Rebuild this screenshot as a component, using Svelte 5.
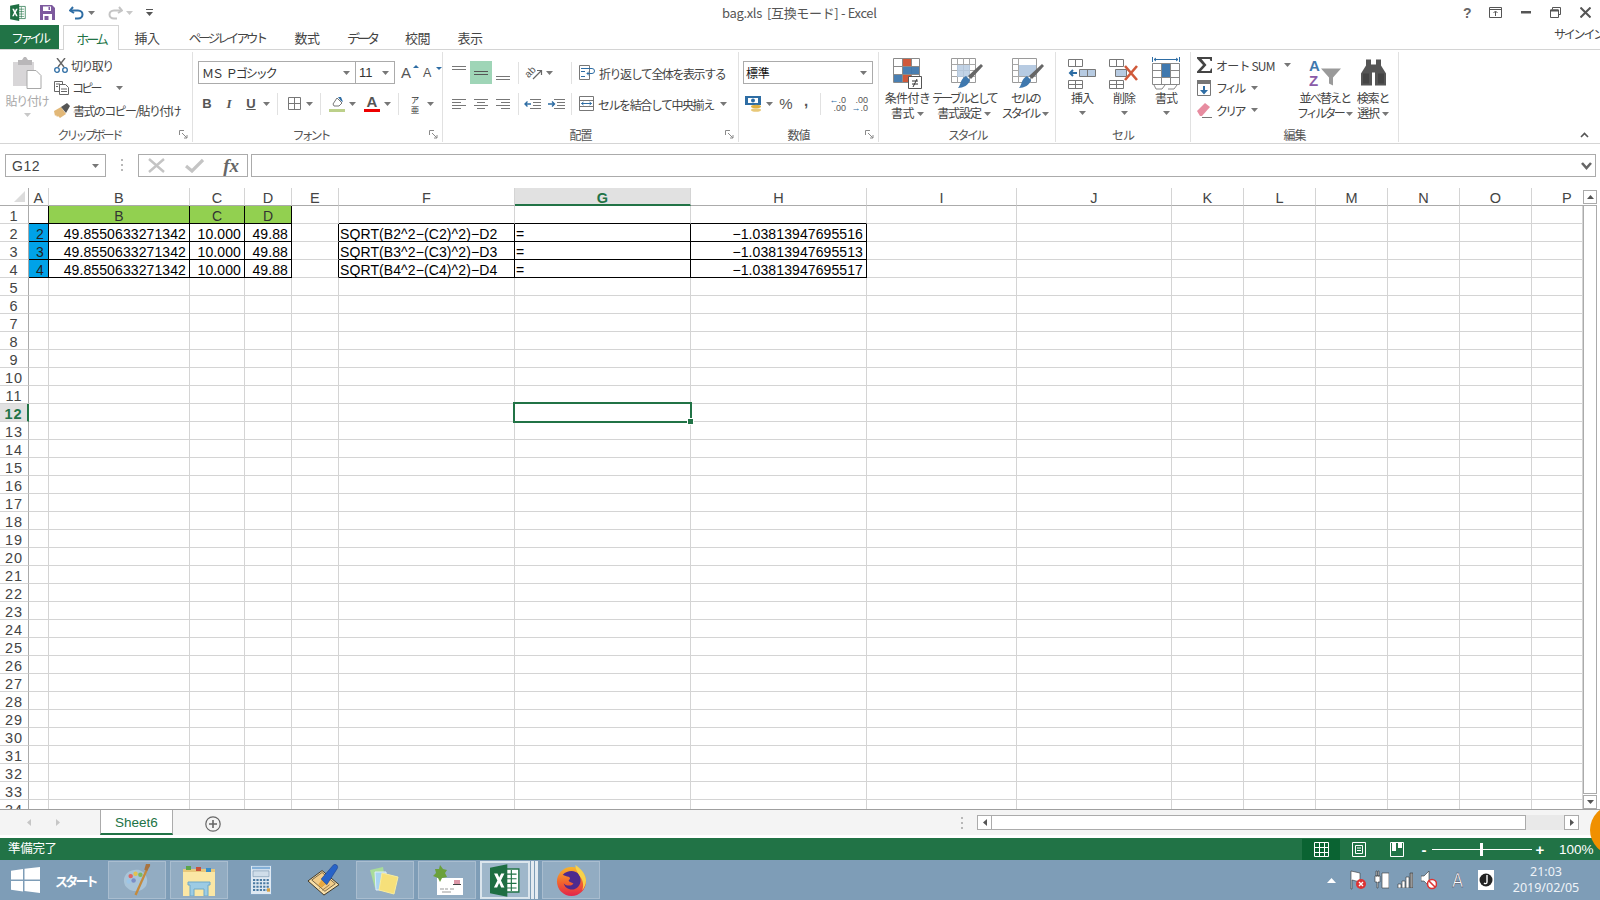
<script>
	const cols = [
		['A', 20], ['B', 141], ['C', 55], ['D', 47], ['E', 47], ['F', 176], ['G', 176], ['H', 176],
		['I', 150], ['J', 155], ['K', 72], ['L', 72], ['M', 72], ['N', 72], ['O', 72], ['P', 51]
	]
	const rows = Array.from({ length: 34 }, (_, i) => i + 1)
	const template = '29px ' + cols.map((c) => c[1] + 'px').join(' ')

	const data = {
		A2: '2', A3: '3', A4: '4',
		B1: 'B', C1: 'C', D1: 'D',
		B2: '49.8550633271342', B3: '49.8550633271342', B4: '49.8550633271342',
		C2: '10.000', C3: '10.000', C4: '10.000',
		D2: '49.88', D3: '49.88', D4: '49.88',
		F2: 'SQRT(B2^2−(C2)^2)−D2', F3: 'SQRT(B3^2−(C3)^2)−D3', F4: 'SQRT(B4^2−(C4)^2)−D4',
		G2: '=', G3: '=', G4: '=',
		H2: '−1.03813947695516', H3: '−1.03813947695513', H4: '−1.03813947695517'
	}

	function boxed(r, c) {
		if (c === undefined) return false
		if ('BCD'.includes(c)) return r >= 1 && r <= 4
		if ('AFGH'.includes(c)) return r >= 2 && r <= 4
		return false
	}

	function cellClass(r, i) {
		const c = cols[i][0]
		const next = cols[i + 1]?.[0]
		let cls = 'cell'
		if (boxed(r, c) || boxed(r, next)) cls += ' br'
		if (boxed(r, c) || boxed(r + 1, c)) cls += ' bb'
		if (r === 1 && 'BCD'.includes(c)) cls += ' green mid'
		if (c === 'A' && r >= 2 && r <= 4) cls += ' blue'
		if (r > 1 && 'BCDH'.includes(c)) cls += ' num'
		return cls
	}
</script>

{#snippet caret(cls = '')}
	<svg class="caret {cls}" width="7" height="4" viewBox="0 0 7 4"><path d="M0 0h7L3.500 4z" /></svg>
{/snippet}

{#snippet launcher()}
	<svg class="launcher" width="9" height="9" viewBox="0 0 9 9" fill="none" stroke="#8a8a8a"><path d="M.5 5V.5H5M3 3l5 5M8 5v3H5" /></svg>
{/snippet}

{#snippet excel(w, h)}
	<svg width={w} height={h} viewBox="0 0 26 28">
		<path fill="#fff" stroke="#217346" stroke-width="1.2" d="M12 4h13v20H12z" />
		<path stroke="#217346" stroke-width="1" d="M14 8.500h9M14 12.500h9M14 16.500h9M14 20.500h9M18.500 5v18" />
		<path fill="#1e6e42" d="M0 3l15-3v28L0 25z" />
		<path fill="#fff" d="M3.500 8h3l1.500 3.500L9.700 8h2.800L9.500 14l3 6H9.700l-1.800-3.800L6.200 20H3.400l3-6z" />
	</svg>
{/snippet}

<div class="app">
	<header class="title">
		<div class="qat">
			{@render excel(16, 17)}
			<svg class="q-save" width="15" height="15" viewBox="0 0 15 15"><path fill="#7d5a9e" d="M0 0h12l3 3v12H0z" /><path fill="#fff" d="M3 1.500h8V6H3zM3 9h9v6H3z" /><path fill="#7d5a9e" d="M8.500 2h1.500v3H8.500zM4.500 11h4v4h-4z" /></svg>
			<svg class="q-undo" width="16" height="14" viewBox="0 0 16 14" fill="none"><path d="M4 1L1 4.500 5 7" stroke="#2e6da4" stroke-width="2" /><path d="M2 4.500h7c6 0 6 8 0 8H6" stroke="#2e6da4" stroke-width="2" /></svg>
			{@render caret('q-c1')}
			<svg class="q-redo" width="16" height="14" viewBox="0 0 16 14" fill="none"><path d="M12 1l3 3.500L11 7" stroke="#c4c4c4" stroke-width="2" /><path d="M14 4.500H7c-6 0-6 8 0 8h3" stroke="#c4c4c4" stroke-width="2" /></svg>
			{@render caret('q-c2 pale')}
			<svg class="q-more" width="7" height="7" viewBox="0 0 7 7"><path fill="#555" d="M0 0h7v1H0zM0 3h7L3.500 7z" /></svg>
		</div>
		<div class="doc">bag.xls&nbsp; [互換モード] - Excel</div>
		<div class="win">
			<span class="help">?</span>
			<svg width="13" height="11" viewBox="0 0 13 11" fill="none" stroke="#555"><path d="M.5.500h12v10H.5zM.5 2.500h12" /><path d="M6.500 9V4.500M4.500 6l2-2 2 2" /></svg>
			<svg width="10" height="3" viewBox="0 0 10 3"><path fill="#555" d="M0 0h10v2.500H0z" /></svg>
			<svg width="11" height="11" viewBox="0 0 11 11" fill="none" stroke="#555"><path d="M2.500 2.500V.5h8v7h-2" /><path d="M.5 3h8v7.500h-8z" /><path d="M.5 3.500h8" stroke-width="2" /></svg>
			<svg width="11" height="11" viewBox="0 0 11 11" stroke="#555" stroke-width="2"><path d="M.5.500l10 10M10.500.500l-10 10" /></svg>
		</div>
	</header>

	<nav class="tabs">
		<span class="tab file">ファイル</span>
		<span class="tab home">ホーム</span>
		<span class="tab t1">挿入</span>
		<span class="tab t2">ページ レイアウト</span>
		<span class="tab t3">数式</span>
		<span class="tab t4">データ</span>
		<span class="tab t5">校閲</span>
		<span class="tab t6">表示</span>
		<span class="signin">サインイン</span>
	</nav>

	<section class="ribbon">
		<div class="group clip">
			<div class="body">
				<div class="paste">
					<svg width="29" height="32" viewBox="0 0 29 32">
						<path fill="#d8d6d8" d="M0 5h21v24H0z" />
						<path fill="#b9b7b9" d="M5 3h4l2-3h2l2 3h4v5H5z" />
						<path fill="#fff" stroke="#a8a8a8" d="M14 13.500h9l5 5v13H14z" />
					</svg>
					<span class="paste-l">貼り付け</span>
					{@render caret('pale')}
				</div>
				<div class="clip-rows">
					<div class="row-i">
						<svg width="14" height="15" viewBox="0 0 14 15" fill="none"><path d="M3 0l7 9M11 0L4 9" stroke="#666" stroke-width="1.400" /><circle cx="3" cy="12" r="2.300" stroke="#2e6da4" stroke-width="1.300" /><circle cx="11" cy="12" r="2.300" stroke="#2e6da4" stroke-width="1.300" /></svg>
						<span>切り取り</span>
					</div>
					<div class="row-i">
						<svg width="15" height="14" viewBox="0 0 15 14" fill="#fff" stroke="#666"><path d="M.5.500h8v10h-8z" /><path d="M5.500 3.500h6l3 3v7h-9z" /><path d="M2 3h4M2 5.500h2M7 8h6M7 10.500h6" /></svg>
						<span class="k">コピー</span>
						{@render caret('copy-c')}
					</div>
					<div class="row-i">
						<svg width="16" height="15" viewBox="0 0 16 15"><path fill="#e2b878" d="M0 8l7-4 5 7-6 4-2-2-1 1-1-2-1 1z" /><path fill="#555" d="M7 4l6-4 3 3-4 7z" /></svg>
						<span>書式のコピー/貼り付け</span>
					</div>
				</div>
			</div>
			<div class="glabel kl">クリップボード{@render launcher()}</div>
		</div>

		<div class="group font">
			<div class="body col">
				<div class="line">
					<div class="combo c-font"><span>ＭＳ Ｐゴシック</span>{@render caret()}</div>
					<div class="combo c-size"><span>11</span>{@render caret()}</div>
					<span class="grow">A<i class="up"></i></span>
					<span class="shrink">A<i class="dn"></i></span>
				</div>
				<div class="line l2 shift">
					<span class="tb b">B</span>
					<span class="tb it">I</span>
					<span class="tb u">U</span>{@render caret('tc')}
					<i class="sep"></i>
					<span class="tb"><svg width="13" height="13" viewBox="0 0 13 13" fill="none" stroke="#777"><path d="M.5.500h12v12H.5zM.5 6.500h12M6.500.500v12" /></svg></span>{@render caret('tc')}
					<i class="sep"></i>
					<span class="tb"><svg width="16" height="16" viewBox="0 0 16 16"><path fill="#fff" stroke="#777" d="M4 8l4-6 5 5-3 3H5z" /><path fill="#2e6da4" d="M9 1l3 0 2 5-2-1z" /><path fill="#bcd08a" d="M0 13h16v3H0z" /></svg></span>{@render caret('tc')}
					<span class="tb color">A<i></i></span>{@render caret('tc')}
					<i class="sep"></i>
					<span class="tb furi"><span>ア</span><span>亜</span></span>{@render caret('tc')}
				</div>
			</div>
			<div class="glabel kl">フォント{@render launcher()}</div>
		</div>

		<div class="group align">
			<div class="body col">
				<div class="line">
					<span class="tb"><svg width="14" height="16" viewBox="0 0 14 16" stroke="#777"><path d="M0 1.500h14M0 4.500h14" /></svg></span>
					<span class="tb on"><svg width="14" height="16" viewBox="0 0 14 16" stroke="#555"><path d="M0 6.500h14M0 9.500h14" /></svg></span>
					<span class="tb"><svg width="14" height="16" viewBox="0 0 14 16" stroke="#777"><path d="M0 11.500h14M0 14.500h14" /></svg></span>
					<i class="sep s5"></i>
					<span class="tb"><svg class="orient" width="18" height="16" viewBox="0 0 18 16" fill="none"><text class="ab" x="1" y="11" transform="rotate(-45 5 9)">ab</text><path d="M8 14l8-8M12 5.500h4.500V10" stroke="#666" stroke-width="1.200" /></svg></span>{@render caret('tc')}
					<i class="sep s6"></i>
					<svg class="wrapic" width="16" height="15" viewBox="0 0 16 15" fill="none"><path d="M.5.500h10v14H.5z" stroke="#777" /><path d="M2 3.500h11a2 2 0 010 5H8M10 6.500l-2 2 2 2M2 6.500h4M2 11.500h4" stroke="#2e6da4" /></svg>
					<span class="wtext">折り返して全体を表示する</span>
				</div>
				<div class="line l2">
					<span class="tb"><svg width="14" height="10" viewBox="0 0 14 10" stroke="#777"><path d="M0 .5h14M0 3.500h9M0 6.500h14M0 9.500h9" /></svg></span>
					<span class="tb"><svg width="14" height="10" viewBox="0 0 14 10" stroke="#777"><path d="M0 .5h14M3 3.500h8M0 6.500h14M3 9.500h8" /></svg></span>
					<span class="tb"><svg width="14" height="10" viewBox="0 0 14 10" stroke="#777"><path d="M0 .5h14M5 3.500h9M0 6.500h14M5 9.500h9" /></svg></span>
					<i class="sep s9"></i>
					<span class="tb w24"><svg width="17" height="10" viewBox="0 0 17 10" fill="none"><path d="M6 .5h11M9 3.500h8M9 6.500h8M6 9.500h11" stroke="#777" /><path d="M7 5H1M3.500 2.500L1 5l2.500 2.500" stroke="#2e6da4" stroke-width="1.400" /></svg></span>
					<span class="tb w24"><svg width="17" height="10" viewBox="0 0 17 10" fill="none"><path d="M6 .5h11M9 3.500h8M9 6.500h8M6 9.500h11" stroke="#777" /><path d="M0 5h6M4 2.500L6.500 5 4 7.500" stroke="#2e6da4" stroke-width="1.400" /></svg></span>
					<i class="sep s7"></i>
					<svg class="wrapic" width="15" height="15" viewBox="0 0 15 15" fill="none"><path d="M.5.500h14v14H.5zM.5 4.500h14M.5 10.500h14" stroke="#777" /><path d="M2.500 7.500h10M4.500 6l-2 1.500 2 1.500M10.500 6l2 1.500-2 1.500" stroke="#2e6da4" /></svg>
					<span class="wtext merge">セルを結合して中央揃え</span>{@render caret('mc')}
				</div>
			</div>
			<div class="glabel">配置{@render launcher()}</div>
		</div>

		<div class="group number">
			<div class="body col">
				<div class="line"><div class="combo c-num"><span>標準</span>{@render caret()}</div></div>
				<div class="line l2">
					<span class="tb w18"><svg width="17" height="18" viewBox="0 0 17 18"><path fill="#2e6da4" d="M0 1h16v9H0z" /><path fill="#fff" d="M3 3h10v5H3z" /><circle cx="8" cy="5.500" r="2" fill="#2e6da4" /><ellipse cx="11" cy="11.500" rx="5" ry="1.800" fill="#e0b040" /><ellipse cx="11" cy="15" rx="5" ry="1.800" fill="#e8c878" /></svg></span>{@render caret('tc')}
					<span class="tb pct">%</span>
					<span class="tb comma">,</span>
					<i class="sep s8"></i>
					<span class="dec"><span><b>←</b>.0</span><span>.00</span></span>
					<span class="dec"><span>.00</span><span><b>→</b>.0</span></span>
				</div>
			</div>
			<div class="glabel">数値{@render launcher()}</div>
		</div>

		<div class="group styles">
			<div class="body big-row">
				<div class="big w46">
					<svg width="29" height="31" viewBox="0 0 29 31">
						<path fill="#fff" stroke="#8a8a8a" d="M.5.500h26v24H.5z" />
						<path stroke="#8a8a8a" d="M.5 8.500h26M.5 16.500h26M9.500.500v24M18.500.500v24" />
						<path fill="#d0593a" d="M10 1h8v7h-8zM10 17h8v7h-8z" />
						<path fill="#3f78ae" d="M10 9h16v7H10zM1 17h8v7H1z" opacity=".95" />
						<path fill="#fff" stroke="#555" d="M15.500 18.500h13v12h-13z" />
						<path stroke="#333" d="M19 23h6M19 26h6M24 21l-4 8" />
					</svg>
					<span>条件付き<br />書式{@render caret('lc')}</span>
				</div>
				<div class="big w64">
					<svg class="nudge" width="32" height="31" viewBox="0 0 32 31">
						<path fill="#fff" stroke="#9a9a9a" d="M.5.500h24v24H.5z" />
						<path stroke="#a8a8a8" d="M.5 6.500h24M.5 12.500h24M.5 18.500h24M6.500.500v24M12.500.500v24M18.500.500v24" />
						<path fill="#b7cbe2" opacity=".85" d="M6 7h13v12H6z" />
						<path fill="#666" d="M30 6l2 2-12 13-3-3z" />
						<path fill="#3f78ae" d="M15 18l4 4c-1 5-7 8-12 8 3-3 2-9 8-12z" />
					</svg>
					<span><span class="k">テーブルとして</span><br />書式設定{@render caret('lc')}</span>
				</div>
				<div class="big w50">
					<svg class="nudge" width="32" height="31" viewBox="0 0 32 31">
						<path fill="#fff" stroke="#9a9a9a" d="M.5.500h24v24H.5z" />
						<path stroke="#a8a8a8" d="M.5 6.500h6M.5 12.500h6M.5 18.500h24M6.500.500v24M18.500 19v6" />
						<path fill="#b7cbe2" d="M7 7h17v11H7z" />
						<path fill="#666" d="M30 6l2 2-12 13-3-3z" />
						<path fill="#3f78ae" d="M15 18l4 4c-1 5-7 8-12 8 3-3 2-9 8-12z" />
					</svg>
					<span><span class="k">セルの</span><br /><span class="k">スタイル</span>{@render caret('lc')}</span>
				</div>
			</div>
			<div class="glabel kl2">スタイル</div>
		</div>

		<div class="group cells">
			<div class="body big-row">
				<div class="big w42">
					<svg width="29" height="31" viewBox="0 0 29 31" fill="none">
						<path stroke="#777" d="M.5 1.500h14v7H.5zM7.500 1.500v7M.5 22.500h14v8H.5zM.5 26.500h14M7.500 22.500v8" />
						<path fill="#b7cbe2" stroke="#777" d="M11.500 11.500h16v7h-16zM19.500 11.500v7" />
						<path stroke="#2e6da4" stroke-width="2" d="M9 15H2M5 12l-3 3 3 3" />
					</svg>
					<span>挿入</span>{@render caret('bc')}
				</div>
				<div class="big w42">
					<svg width="30" height="31" viewBox="0 0 30 31" fill="none">
						<path stroke="#777" d="M.5 1.500h14v7H.5zM7.500 1.500v7M.5 22.500h14v8H.5zM.5 26.500h14M7.500 22.500v8" />
						<path fill="#b7cbe2" stroke="#777" d="M6.500 11.500h11v7h-11z" />
						<path stroke="#d0593a" stroke-width="2.600" d="M16 8l12 14M28 8L16 22" />
					</svg>
					<span>削除</span>{@render caret('bc')}
				</div>
				<div class="big w42">
					<svg width="29" height="33" viewBox="0 0 29 33" fill="none">
						<path stroke="#2e6da4" d="M.5 0v5M27.500 0v5M2 2.500h24M4 1L2 2.500 4 4M24 1l2 1.500L24 4" />
						<path stroke="#888" fill="#fff" d="M.5 6.500h27v21H.5z" />
						<path stroke="#888" d="M.5 13.500h27M.5 20.500h27M9.500 6.500v21M18.500 6.500v21" />
						<path fill="#3f78ae" d="M10 7h8v13h-8z" />
						<path stroke="#888" d="M2 28l2 4h6l3-4M16 32h6l3-4" />
					</svg>
					<span>書式</span>{@render caret('bc')}
				</div>
			</div>
			<div class="glabel">セル</div>
		</div>

		<div class="group edit">
			<div class="body">
				<div class="clip-rows e-rows">
					<div class="row-i">
						<svg width="15" height="16" viewBox="0 0 15 16"><path fill="#444" d="M0 0h15v4h-1.500l-.8-2H4.500l5 6-5.500 6h9l1-2.500h1.500V16H0v-1.500L6 8 0 1.500z" /></svg>
						<span>オート SUM</span>{@render caret('sum-c')}
					</div>
					<div class="row-i">
						<svg width="15" height="16" viewBox="0 0 15 16"><path fill="#fff" stroke="#777" d="M.5.500h13v15H.5z" /><path fill="#777" d="M0 0h14v4H0z" /><path fill="#2e6da4" d="M6 6h2v4h3l-4 4.500L3 10h3z" /></svg>
						<span class="k">フィル</span>{@render caret('fil-c')}
					</div>
					<div class="row-i">
						<svg width="15" height="15" viewBox="0 0 15 15"><path fill="#e78ca0" d="M0 8l8-8 5 4-8 9H3z" /><path fill="#777" d="M5 14h10v1H5z" /></svg>
						<span class="k">クリア</span>{@render caret('fil-c')}
					</div>
				</div>
				<div class="big w56 sort">
					<svg width="32" height="30" viewBox="0 0 32 30">
						<text x="0" y="12" class="az a">A</text>
						<text x="0" y="27" class="az z">Z</text>
						<path fill="#9a9a9a" d="M12 10h20l-8 9v8l-4-2v-6z" />
					</svg>
					<span>並べ替えと<br /><span class="k">フィルター</span>{@render caret('lc')}</span>
				</div>
				<div class="big w42 find">
					<svg width="27" height="28" viewBox="0 0 27 28"><path fill="#555" d="M6 0h5v5h5V0h5v6l5 8v12H15V13h-3v13H1V14l5-8z" /><path fill="#333" d="M3 14h6v10H3zM18 14h6v10h-6z" opacity=".5" /></svg>
					<span>検索と<br />選択{@render caret('lc')}</span>
				</div>
			</div>
			<div class="glabel">編集</div>
		</div>

		<svg class="collapse" width="9" height="6" viewBox="0 0 9 6" fill="none" stroke="#555" stroke-width="1.600"><path d="M1 5l3.500-3.500L8 5" /></svg>
	</section>

	<section class="formula">
		<div class="namebox"><span>G12</span>{@render caret()}</div>
		<span class="dots"><i></i><i></i><i></i></span>
		<div class="fbtns">
			<svg width="17" height="15" viewBox="0 0 17 15" stroke="#c4c4c4" stroke-width="2.400"><path d="M1 1l15 13M16 1L1 14" /></svg>
			<svg width="19" height="15" viewBox="0 0 19 15" fill="none" stroke="#c4c4c4" stroke-width="3.200"><path d="M1 8l6 5L18 2" /></svg>
			<span class="fx">fx</span>
		</div>
		<div class="finput">
			<svg width="11" height="8" viewBox="0 0 11 8" fill="none" stroke="#666" stroke-width="2.600"><path d="M1 1l4.500 5L10 1" /></svg>
		</div>
	</section>

	<section class="sheet">
		<div class="grid-wrap">
			<div class="grid" style="grid-template-columns: {template}">
				<div class="corner"><svg width="11" height="11" viewBox="0 0 11 11"><path fill="#dcdcdc" d="M11 0v11H0z" /></svg></div>
				{#each cols as c}
					<div class="colh" class:active={c[0] === 'G'} class:cut={c[0] === 'P'}>{c[0]}</div>
				{/each}
				{#each rows as r}
					<div class="rowh" class:active={r === 12}>{r}</div>
					{#each cols as c, i}
						<div class={cellClass(r, i)}>{data[c[0] + r] ?? ''}</div>
					{/each}
				{/each}
			</div>
			<div class="selection"><i></i></div>
		</div>
		<div class="vscroll">
			<span class="sbtn"><svg width="7" height="4" viewBox="0 0 7 4"><path fill="#555" d="M3.500 0L7 4H0z" /></svg></span>
			<span class="vthumb"></span>
			<span class="sbtn"><svg width="7" height="4" viewBox="0 0 7 4"><path fill="#555" d="M0 0h7L3.500 4z" /></svg></span>
		</div>
	</section>

	<section class="sheetbar">
		<svg class="arr a1" width="4" height="7" viewBox="0 0 4 7"><path fill="#c6c6c6" d="M4 0v7L0 3.500z" /></svg>
		<svg class="arr a2" width="4" height="7" viewBox="0 0 4 7"><path fill="#c6c6c6" d="M0 0v7l4-3.500z" /></svg>
		<div class="sheettab">Sheet6</div>
		<svg class="plus" width="16" height="16" viewBox="0 0 16 16" fill="none" stroke="#666"><circle cx="8" cy="8" r="7.200" stroke-width="1.200" /><path d="M8 4v8M4 8h8" stroke-width="1.600" /></svg>
		<span class="dots d2"><i></i><i></i><i></i></span>
		<div class="hscroll">
			<span class="sbtn"><svg width="4" height="7" viewBox="0 0 4 7"><path fill="#555" d="M4 0v7L0 3.500z" /></svg></span>
			<span class="hthumb"></span>
			<span class="htrack"></span>
			<span class="sbtn"><svg width="4" height="7" viewBox="0 0 4 7"><path fill="#555" d="M0 0v7l4-3.500z" /></svg></span>
		</div>
	</section>

	<footer class="status">
		<span class="ready">準備完了</span>
		<div class="views">
			<span class="view on"><svg width="15" height="15" viewBox="0 0 15 15" fill="none" stroke="#fff"><path d="M.5.500h14v14H.5zM.5 5.500h14M.5 10.500h14M5.500.500v14M10.500.500v14" /></svg></span>
			<span class="view"><svg width="14" height="15" viewBox="0 0 14 15" fill="none" stroke="#fff"><path d="M.5.500h13v14H.5zM3.500 3.500h7v8h-7zM5 6h4M5 8.500h4" /></svg></span>
			<span class="view"><svg width="14" height="15" viewBox="0 0 14 15"><path fill="none" stroke="#fff" d="M.5.500h13v14H.5z" /><path fill="#fff" d="M2 1h4v8H2zM8 1h4v5H8z" /></svg></span>
		</div>
		<div class="zoom">
			<span class="zb">-</span>
			<span class="slider"><i></i></span>
			<span class="zb plusb">+</span>
		</div>
		<span class="pct100">100%</span>
	</footer>

	<footer class="taskbar">
		<div class="start">
			<svg width="29" height="26" viewBox="0 0 29 26"><path fill="#fff" d="M0 3.700l12-1.700v10.500H0zM13.500 1.800L29 0v12.500H13.500zM0 14h12v10.500L0 22.800zM13.500 14H29v12l-15.500-2z" /></svg>
			<span>スタート</span>
		</div>
		<div class="tasks">
			<span class="task box">
				<svg width="30" height="32" viewBox="1 3 29 33">
					<path fill="#a9c4d8" d="M2 20c0-8 8-12 15-11 7 2 11 9 8 16-3 6-10 7-16 5-4-2-7-5-7-10z" />
					<circle cx="7" cy="21" r="2.300" fill="#9cc6e8" /><circle cx="9" cy="15.500" r="2.300" fill="#d66" /><circle cx="14" cy="13" r="2.300" fill="#e2c250" /><circle cx="12" cy="20" r="2.300" fill="#7b8ec8" /><circle cx="19" cy="14" r="2.300" fill="#7cb860" />
					<path stroke="#c48a3c" stroke-width="2.400" d="M14 35l12-27" /><path fill="#a87440" d="M23 9l2-7 4-2v5l-3 5z" />
				</svg>
			</span>
			<span class="task box">
				<svg width="32" height="31" viewBox="0 0 32 31">
					<path fill="#e9c87a" d="M0 4h32v6H0z" />
					<path fill="#5ca64a" d="M3 1h5v4H3z" /><path fill="#c9503a" d="M13 2h5v4h-5z" /><path fill="#3a8fc9" d="M23 3h5v4h-5z" />
					<path fill="#fbe7a5" d="M0 7h32v24H0z" />
					<path fill="#9ccbe4" stroke="#6fa8c8" d="M5 17h22v3h-2v11h-4v-7H11v7H7V20H5z" />
				</svg>
			</span>
			<span class="task">
				<svg width="22" height="30" viewBox="0 0 22 36" preserveAspectRatio="none">
					<path fill="#dfe9f2" stroke="#7a9cbc" d="M.5.500h21v35H.5z" />
					<path fill="#84b0d8" d="M2 2h18v3H2z" /><path fill="#cfdde9" stroke="#6a8aa6" stroke-width=".6" d="M3 7h16v7H3z" />
					<path stroke="#4a7aa2" stroke-width="2.400" stroke-dasharray="2.200 1.200" d="M3 18h16M3 22h16M3 26h16M3 30h16" />
					<path fill="#d8a040" d="M17 28h3v4h-3z" />
				</svg>
			</span>
			<span class="task">
				<svg width="33" height="32" viewBox="0 2 33 34">
					<path fill="#f8dfa8" stroke="#3a3020" d="M0 20l15-11 18 15-16 11z" />
					<path fill="#f2cc88" stroke="#3a3020" stroke-width=".7" d="M4 19l11-8 14 12-11 8z" />
					<path stroke="#8a6a3a" stroke-width=".8" d="M12 28l8-6M15 30l8-6" />
					<path fill="#e8a840" d="M11 24l4-6 6 4-7 5z" />
					<path fill="#2763c8" stroke="#1b3f86" stroke-width=".6" d="M14 18L27 3c2-2 6 1 4 4L20 24z" />
				</svg>
			</span>
			<span class="task box">
				<svg width="32" height="32" viewBox="0 0 32 32">
					<path fill="#a9dc9a" d="M1 6l13-3 3 18-11 3z" />
					<path fill="#a8d4f2" stroke="#dfeefa" d="M6 8l11 0 1 18H7z" />
					<path fill="#f6e07a" stroke="#f8ec9e" d="M13 9l16 4-4 17-15-4z" />
				</svg>
			</span>
			<span class="task box">
				<svg width="30" height="30" viewBox="0 0 30 30" class="mail">
					<path fill="#fff" d="M4 13h26v17H4z" />
					<path fill="#dc98a8" d="M21 15h6v4h-6z" /><path fill="#444" d="M20 19h8v1h-8z" />
					<path stroke="#999" d="M7 24h4M12 24h3M17 24h4M9 27h9" />
					<path fill="#6aa03a" d="M7 0l3 4 4 1-2 3 2 4-5 1-2 4-2-4-5-2 3-3-1-4 4 0z" />
				</svg>
			</span>
			<span class="task excel-t">{@render excel(30, 33)}</span>
			<span class="stack"></span>
			<span class="stack"></span>
			<span class="task box fox">
				<svg width="31" height="31" viewBox="0 0 32 32">
					<defs><linearGradient id="fx1" x1="0" y1="0" x2="0" y2="1"><stop offset="0" stop-color="#f7b52c" /><stop offset=".55" stop-color="#f2622e" /><stop offset="1" stop-color="#e3244c" /></linearGradient></defs>
					<circle cx="16" cy="17" r="15" fill="url(#fx1)" />
					<path fill="#4d2a8e" d="M7 10c5-5 13-5 17 0 3 6 1 13-5 15-6 1-10-2-11-6 3 3 8 3 10 0-2-1-4-1-5-3 2-2 2-3 0-4-2 0-4-1-6-2z" />
					<path fill="#f7d24a" d="M20 0c6 4 11 10 11 16 0 4-2 8-4 10 2-5 1-10-2-14-2-3-5-7-5-12z" />
				</svg>
			</span>
		</div>
		<div class="tray">
			<svg class="t-ch" width="9" height="5" viewBox="0 0 9 5"><path fill="#fff" d="M4.500 0L9 5H0z" /></svg>
			<svg width="16" height="20" viewBox="0 0 16 20"><path fill="#fff" stroke="#333" stroke-width=".6" d="M1 1l9 2v9l-8-2v9H1z" /><circle cx="11" cy="14" r="5" fill="#d33" /><path stroke="#fff" stroke-width="1.400" d="M9 12l4 4M13 12l-4 4" /></svg>
			<svg width="15" height="20" viewBox="0 0 15 20"><path fill="#fff" stroke="#333" stroke-width=".6" d="M8 3h7v15H8zM1 6h5v6H4v6H3v-6H1zM2 1h1v5H2zM4 1h1v5H4z" /></svg>
			<svg width="16" height="16" viewBox="0 0 16 16"><path fill="#fff" stroke="#333" stroke-width=".6" d="M1 12h3v4H1zM5 9h3v7H5zM9 5h3v11H9z" /><path fill="#999" stroke="#333" stroke-width=".6" d="M13 1h3v15h-3z" /></svg>
			<svg width="16" height="20" viewBox="0 0 16 20"><path fill="#fff" stroke="#333" stroke-width=".6" d="M0 6h3l5-5v15L3 11H0z" /><circle cx="11" cy="14" r="4.500" fill="#fff" stroke="#d33" stroke-width="1.600" /><path stroke="#d33" stroke-width="1.600" d="M8 11l6 6" /></svg>
			<span class="ime">A</span>
			<svg width="16" height="20" viewBox="0 0 16 20"><path fill="#fff" d="M0 0h16v20H0z" /><circle cx="8" cy="10" r="6.500" fill="#222" /><path fill="none" stroke="#fff" stroke-width="1.400" d="M9 5v7c0 2-2 2-3 1" /></svg>
		</div>
		<div class="clock"><span>21:03</span><span>2019/02/05</span></div>
	</footer>

	<div class="orange"></div>
</div>

<style>
	:global(body) {
		margin: 0;
		background: #fff;
		overflow: hidden;
	}
	.app {
		position: relative;
		width: 1600px;
		height: 900px;
		overflow: hidden;
		font-family: 'Noto Sans CJK JP', sans-serif;
		color: #444;
		font-size: 12px;
		letter-spacing: -1.1px;
		display: flex;
		flex-direction: column;
	}
	svg {
		display: block;
		flex: none;
	}
	.caret {
		fill: #777;
	}
	:global(.caret.pale) {
		fill: #c8c8c8;
	}

	/* title */
	.title {
		height: 25px;
		display: flex;
		align-items: center;
		flex: none;
	}
	.qat {
		display: flex;
		align-items: center;
		width: 722px;
		padding-left: 10px;
		box-sizing: border-box;
	}
	.q-save {
		margin-left: 14px;
	}
	.q-undo {
		margin-left: 14px;
	}
	:global(.q-c1) {
		margin-left: 3px;
	}
	.q-redo {
		margin-left: 12px;
	}
	:global(.q-c2) {
		margin-left: 3px;
	}
	.q-more {
		margin-left: 13px;
	}
	.doc {
		font-size: 13px;
		letter-spacing: -0.35px;
		color: #555;
		white-space: nowrap;
	}
	.win {
		display: flex;
		align-items: center;
		margin-left: auto;
		width: 137px;
		justify-content: space-between;
		padding-right: 9px;
		box-sizing: border-box;
	}
	.help {
		font: bold 14px 'Liberation Sans', sans-serif;
		color: #666;
	}

	/* tabs */
	.tabs {
		height: 25px;
		flex: none;
		display: flex;
		align-items: stretch;
		border-bottom: 1px solid #d4d4d4;
		box-sizing: border-box;
		font-size: 13px;
		letter-spacing: -0.6px;
		position: relative;
	}
	.tab {
		display: flex;
		align-items: center;
		justify-content: center;
		white-space: nowrap;
		padding-top: 1px;
		box-sizing: border-box;
	}
	.file {
		width: 59px;
		background: #217346;
		color: #fff;
		font-size: 12.500px;
		letter-spacing: -3.4px;
	}
	.home {
		width: 56px;
		margin-left: 4px;
		height: 25px;
		background: #fff;
		border: 1px solid #d4d4d4;
		border-bottom: none;
		color: #217346;
		letter-spacing: -3px;
	}
	.t1 {
		width: 24px;
		margin-left: 16px;
	}
	.t2 {
		width: 80px;
		margin-left: 28px;
		font-size: 12.500px;
		letter-spacing: -2.900px;
	}
	.t3 {
		width: 24px;
		margin-left: 28px;
	}
	.t4 {
		width: 30px;
		margin-left: 28px;
		letter-spacing: -3px;
	}
	.t5 {
		width: 25px;
		margin-left: 28px;
	}
	.t6 {
		width: 24px;
		margin-left: 28px;
	}
	.signin {
		position: absolute;
		left: 1554px;
		top: 0;
		font-size: 12px;
		letter-spacing: -2.200px;
		line-height: 18px;
		white-space: nowrap;
	}

	/* ribbon */
	.ribbon {
		height: 94px;
		flex: none;
		display: flex;
		border-bottom: 1px solid #d5d5d5;
		box-sizing: border-box;
		position: relative;
		white-space: nowrap;
	}
	.group {
		display: flex;
		flex-direction: column;
		box-sizing: border-box;
		height: 90px;
		margin-top: 2px;
		border-right: 1px solid #e1e1e1;
		position: relative;
		flex: none;
	}
	.clip {
		width: 193px;
		letter-spacing: -1.600px;
	}
	.font {
		width: 250px;
	}
	.align {
		width: 296px;
	}
	.number {
		width: 140px;
	}
	.styles {
		width: 177px;
	}
	.cells {
		width: 135px;
	}
	.edit {
		width: 208px;
	}
	.body {
		height: 73px;
		display: flex;
		box-sizing: border-box;
	}
	.glabel {
		height: 17px;
		line-height: 19px;
		text-align: center;
		color: #555;
	}
	.kl {
		letter-spacing: -3px;
		padding-right: 14px;
	}
	.kl2 {
		letter-spacing: -2.500px;
	}
	.align .glabel {
		padding-right: 20px;
	}
	.number .glabel {
		padding-right: 20px;
	}
	.launcher {
		position: absolute;
		right: 4px;
		bottom: 3px;
	}
	.k {
		letter-spacing: -2.700px;
	}

	.paste {
		width: 54px;
		display: flex;
		flex-direction: column;
		align-items: center;
		padding-top: 5px;
		flex: none;
	}
	.paste-l {
		color: #a8a8a8;
		line-height: 15px;
		margin-top: 4px;
		letter-spacing: -1.300px;
	}
	.paste :global(.caret) {
		margin-top: 5px;
	}
	.clip-rows {
		display: flex;
		flex-direction: column;
		flex: none;
		padding-top: 2px;
	}
	.row-i {
		height: 22.500px;
		display: flex;
		align-items: center;
		gap: 3px;
		line-height: 1;
	}
	.row-i span {
		margin-top: 1px;
	}
	:global(.copy-c) {
		margin-left: 13px;
	}

	.col {
		flex-direction: column;
		padding: 9px 0 0 5px;
		gap: 8px;
	}
	.line {
		height: 23px;
		display: flex;
		align-items: center;
		flex: none;
	}
	.shift {
		margin-left: -2px;
	}
	.combo {
		height: 23px;
		box-sizing: border-box;
		border: 1px solid #ababab;
		display: flex;
		align-items: center;
		justify-content: space-between;
		padding: 0 5px 0 3px;
		background: #fff;
		color: #333;
		flex: none;
	}
	.c-font {
		width: 158px;
		font-size: 12px;
	}
	.c-font span {
		letter-spacing: -2px;
		word-spacing: 3px;
	}
	.c-size {
		width: 40px;
		margin-left: -1px;
		font: 13px 'Liberation Sans', sans-serif;
		letter-spacing: 0;
	}
	.c-num {
		width: 130px;
		color: #111;
		letter-spacing: -0.300px;
		padding-left: 2px;
	}
	.number .col {
		padding-left: 4px;
	}
	.grow,
	.shrink {
		font-family: 'Liberation Sans', sans-serif;
		position: relative;
		color: #555;
		letter-spacing: 0;
	}
	.grow {
		font-size: 15px;
		margin-left: 6px;
		width: 22px;
	}
	.shrink {
		font-size: 12.500px;
		width: 20px;
		margin-left: 1px;
	}
	.up,
	.dn {
		position: absolute;
		top: 1px;
		right: 3px;
		border: 3px solid transparent;
		border-top: none;
		border-bottom: 3px solid #2e6da4;
	}
	.dn {
		border-bottom: none;
		border-top: 3px solid #2e6da4;
		right: 0;
	}
	.tb {
		width: 22px;
		height: 23px;
		display: flex;
		align-items: center;
		justify-content: center;
		flex: none;
		font-family: 'Liberation Sans', sans-serif;
		letter-spacing: 0;
		color: #555;
	}
	.w24 {
		width: 24px;
	}
	.w18 {
		width: 24px;
		margin-left: -2px;
	}
	.b {
		font-weight: bold;
		font-size: 13px;
	}
	.it {
		font-style: italic;
		font-weight: bold;
		font-size: 13px;
		font-family: 'Liberation Serif', serif;
	}
	.u {
		font-weight: bold;
		font-size: 13px;
		text-decoration: underline;
	}
	:global(.tc) {
		margin: 0 4px 0 1px;
	}
	.l2 .sep {
		margin: 0 5px 0 3px;
	}
	.sep {
		width: 1px;
		height: 22px;
		background: #e1e1e1;
		flex: none;
	}
	.orient {
		overflow: visible;
	}
	.ab {
		font: 10px 'Liberation Sans', sans-serif;
		fill: #555;
		letter-spacing: 0;
	}
	.color {
		position: relative;
		font-size: 15px;
		font-weight: bold;
		padding-bottom: 4px;
		box-sizing: border-box;
		margin-left: 1px;
	}
	.color i {
		position: absolute;
		left: 3px;
		right: 3px;
		bottom: 3px;
		height: 3px;
		background: #e00;
	}
	.furi {
		font-family: 'Noto Sans CJK JP', sans-serif;
		font-size: 8.500px;
		line-height: 10px;
		flex-direction: column;
		box-sizing: border-box;
		color: #333;
	}
	.on {
		background: #9fd5b7;
	}
	.line .sep.s5 {
		margin: 0 4px 0 4px;
	}
	.line .sep.s6 {
		margin: 0 7px 0 14px;
	}
	.l2 .sep.s9 {
		margin: 0 1px 0 4px;
	}
	.l2 .sep.s7 {
		margin: 0 7px 0 3px;
	}
	.wrapic {
		margin-right: 4px;
	}
	.wtext {
		font-size: 12px;
		letter-spacing: -1.450px;
		color: #444;
		margin-top: 1px;
	}
	.merge {
		width: 122px;
	}
	.pct {
		font-size: 15px;
		width: 22px;
		margin-left: -2px;
	}
	.comma {
		font-weight: bold;
		font-size: 15px;
		width: 18px;
		padding-bottom: 6px;
		box-sizing: border-box;
	}
	.l2 .sep.s8 {
		margin: 0 6px 0 5px;
	}
	.dec {
		width: 22px;
		font: 9px/8px 'Liberation Sans', sans-serif;
		letter-spacing: 0;
		display: flex;
		flex-direction: column;
		align-items: flex-end;
		padding-right: 3px;
		box-sizing: border-box;
		flex: none;
		color: #555;
	}
	.dec b {
		font-weight: normal;
		color: #2e6da4;
	}

	.big-row {
		align-items: stretch;
	}
	.big {
		display: flex;
		flex-direction: column;
		align-items: center;
		padding-top: 5px;
		flex: none;
		box-sizing: border-box;
		line-height: 15px;
		text-align: center;
	}
	.big svg:first-child {
		height: 33px;
	}
	.big .nudge {
		margin-left: 6px;
	}
	.big :global(.lc) {
		display: inline-block;
		margin-left: 3px;
		vertical-align: 2px;
	}
	.big :global(.bc) {
		margin-top: 6px;
	}
	.w46 {
		width: 47px;
		margin-left: 5px;
		letter-spacing: -0.600px;
	}
	.w64 {
		width: 66px;
	}
	.w50 {
		width: 52px;
		margin-left: 2px;
	}
	.w42 {
		width: 42px;
	}
	.cells .big:first-child {
		margin-left: 5px;
	}
	.e-rows {
		margin-left: 6px;
		width: 101px;
		letter-spacing: -0.800px;
	}
	.e-rows .row-i {
		gap: 4px;
	}
	:global(.sum-c) {
		margin-left: 5px;
	}
	:global(.fil-c) {
		margin-left: 3px;
	}
	.w56 {
		width: 56px;
	}
	.sort {
		margin-left: -1px;
		letter-spacing: -1.800px;
	}
	.find {
		width: 46px;
		margin-left: -3px;
		letter-spacing: -1.200px;
	}
	.az {
		font: bold 15px 'Liberation Sans', sans-serif;
	}
	.az.a {
		fill: #3f78ae;
	}
	.az.z {
		fill: #8a5ba8;
	}
	.collapse {
		position: absolute;
		right: 11px;
		bottom: 5px;
	}

	/* formula */
	.formula {
		flex: none;
		display: flex;
		align-items: stretch;
		height: 23px;
		margin-top: 10px;
		padding-left: 5px;
		box-sizing: content-box;
	}
	.namebox {
		width: 101px;
		box-sizing: border-box;
		border: 1px solid #ababab;
		display: flex;
		align-items: center;
		justify-content: space-between;
		padding: 0 6px;
		font: 14px 'Liberation Sans', sans-serif;
		letter-spacing: 0.500px;
		color: #444;
	}
	.formula .dots {
		margin: 0 12px 0 15px;
		width: 2px;
		padding-top: 5px;
	}
	.dots {
		display: flex;
		flex-direction: column;
		gap: 3px;
		box-sizing: border-box;
		flex: none;
	}
	.dots i {
		width: 2px;
		height: 2px;
		background: #b8b8b8;
	}
	.fbtns {
		width: 110px;
		box-sizing: border-box;
		border: 1px solid #ababab;
		display: flex;
		align-items: center;
		justify-content: space-between;
		padding: 0 8px 0 9px;
		margin-left: 3px;
	}
	.fx {
		font: italic bold 19px 'Liberation Serif', serif;
		color: #666;
		letter-spacing: 0;
		line-height: 1;
	}
	.finput {
		margin-left: 3px;
		width: 1345px;
		box-sizing: border-box;
		border: 1px solid #ababab;
		display: flex;
		align-items: center;
		justify-content: flex-end;
		padding-right: 3px;
	}

	/* sheet */
	.sheet {
		flex: none;
		margin-top: 11px;
		height: 622px;
		display: flex;
		border-bottom: 1px solid #9f9f9f;
		box-sizing: border-box;
	}
	.grid-wrap {
		width: 1583px;
		position: relative;
		overflow: hidden;
		flex: none;
	}
	.grid {
		display: grid;
		grid-auto-rows: 18px;
		grid-template-rows: 18px;
		font: 14px/20px 'Liberation Sans', sans-serif;
		letter-spacing: 0.080px;
	}
	.corner {
		border-right: 1px solid #ababab;
		border-bottom: 1px solid #ababab;
		box-sizing: border-box;
		display: flex;
		justify-content: flex-end;
		align-items: flex-end;
		padding: 0 3px 3px 0;
	}
	.colh {
		border-right: 1px solid #d4d4d4;
		border-bottom: 1px solid #ababab;
		box-sizing: border-box;
		text-align: center;
		color: #444;
		font-size: 14.500px;
		line-height: 21px;
		overflow: hidden;
	}
	.colh.cut {
		padding-left: 19px;
		border-right: none;
	}
	.colh.active {
		background: #e1e1e1;
		color: #217346;
		font-weight: bold;
		border-bottom: 2px solid #217346;
		line-height: 20px;
	}
	.rowh {
		border-right: 1px solid #ababab;
		border-bottom: 1px solid #d4d4d4;
		box-sizing: border-box;
		text-align: center;
		color: #444;
		font-size: 14.500px;
		letter-spacing: 1px;
		overflow: hidden;
	}
	.rowh.active {
		background: #e1e1e1;
		color: #217346;
		font-weight: bold;
		border-right: 2px solid #217346;
	}
	.cell {
		border-right: 1px solid #d4d4d4;
		border-bottom: 1px solid #d4d4d4;
		box-sizing: border-box;
		white-space: nowrap;
		overflow: hidden;
		color: #000;
		padding: 0 3px 0 1px;
		letter-spacing: 0.100px;
	}
	.br {
		border-right-color: #000;
	}
	.bb {
		border-bottom-color: #000;
	}
	.num {
		text-align: right;
	}
	.mid {
		text-align: center;
		padding: 0;
		color: #333;
	}
	.green {
		background: #92d050;
	}
	.blue {
		background: #00a2e8;
		text-align: right;
		padding-right: 4px;
		color: #222;
	}
	.selection {
		position: absolute;
		left: 513px;
		top: 214px;
		width: 179px;
		height: 21px;
		box-sizing: border-box;
		border: 2px solid #217346;
		pointer-events: none;
	}
	.selection i {
		position: absolute;
		right: -4px;
		bottom: -4px;
		width: 5px;
		height: 5px;
		background: #217346;
		border: 1px solid #fff;
	}
	.vscroll {
		width: 17px;
		display: flex;
		flex-direction: column;
		align-items: flex-start;
		padding-top: 2px;
		gap: 1px;
		box-sizing: border-box;
	}
	.sbtn {
		width: 14px;
		height: 14px;
		box-sizing: border-box;
		border: 1px solid #ababab;
		display: flex;
		align-items: center;
		justify-content: center;
		flex: none;
		background: #fff;
	}
	.vthumb {
		flex: 1;
		width: 14px;
		box-sizing: border-box;
		border: 1px solid #ababab;
		background: #fff;
	}

	/* tabs strip */
	.sheetbar {
		flex: none;
		height: 25px;
		background: #f4f4f4;
		display: flex;
		align-items: center;
		position: relative;
	}
	.a1 {
		margin-left: 27px;
	}
	.a2 {
		margin-left: 25px;
	}
	.sheettab {
		margin-left: 40px;
		width: 73px;
		height: 25px;
		box-sizing: border-box;
		background: #fff;
		border: 1px solid #ababab;
		border-top: none;
		border-bottom: 2px solid #217346;
		color: #217346;
		font: 13.500px/26px 'Liberation Sans', sans-serif;
		letter-spacing: 0;
		text-align: center;
		align-self: flex-start;
		overflow: hidden;
	}
	.plus {
		margin: 2px 0 0 32px;
	}
	.sheetbar .d2 {
		margin-left: 740px;
		width: 2px;
	}
	.hscroll {
		margin-left: 14px;
		width: 602px;
		height: 15px;
		display: flex;
		box-sizing: border-box;
		flex: none;
	}
	.hscroll .sbtn {
		width: 15px;
		height: 15px;
	}
	.hthumb {
		width: 534px;
		box-sizing: border-box;
		border: 1px solid #ababab;
		border-left: none;
		background: #fff;
	}
	.htrack {
		flex: 1;
		background: #e9e9e9;
	}

	/* status */
	.status {
		flex: none;
		margin-top: 3px;
		height: 22px;
		background: #217346;
		color: #fff;
		display: flex;
		align-items: center;
		box-sizing: border-box;
		letter-spacing: -0.300px;
		font-size: 12.500px;
	}
	.ready {
		margin-left: 8px;
		width: 1294px;
		flex: none;
		line-height: 19px;
		align-self: flex-start;
	}
	.views {
		display: flex;
		height: 22px;
		align-items: center;
		flex: none;
	}
	.view {
		width: 38px;
		height: 21px;
		display: flex;
		align-items: center;
		justify-content: center;
	}
	.view.on {
		background: #0a6332;
	}
	.zoom {
		display: flex;
		align-items: center;
		flex: none;
	}
	.zb {
		font: bold 15px 'Liberation Sans', sans-serif;
		width: 16px;
		text-align: center;
		letter-spacing: 0;
	}
	.slider {
		width: 100px;
		height: 1px;
		background: #fff;
		position: relative;
	}
	.slider i {
		position: absolute;
		left: 48px;
		top: -6px;
		width: 3px;
		height: 13px;
		background: #fff;
	}
	.pct100 {
		font: 13.500px 'Liberation Sans', sans-serif;
		letter-spacing: 0;
		margin-left: 11px;
		flex: none;
	}

	/* taskbar */
	.taskbar {
		flex: none;
		height: 40px;
		background: #7e9db7;
		display: flex;
		align-items: center;
		color: #fff;
	}
	.start {
		width: 108px;
		display: flex;
		align-items: center;
		padding-left: 11px;
		box-sizing: border-box;
		gap: 15px;
		font-weight: bold;
		font-size: 13px;
		letter-spacing: -2.800px;
		flex: none;
	}
	.tasks {
		display: flex;
		align-items: center;
		gap: 4px;
		flex: none;
		height: 40px;
	}
	.task {
		width: 58px;
		height: 38px;
		box-sizing: border-box;
		display: flex;
		align-items: center;
		justify-content: center;
		flex: none;
		border: 1px solid transparent;
	}
	.task.box {
		background: #92acc2;
		border: 1px solid #a9bdcf;
	}
	.mail {
		margin-left: 2px;
	}
	.excel-t {
		width: 50px;
		background: #9fb7ca;
		border: 2px solid #dbe5ec;
	}
	.stack {
		width: 3px;
		height: 38px;
		background: #e4ebf1;
		margin-left: -3px;
		flex: none;
	}
	.tray {
		margin-left: auto;
		display: flex;
		align-items: center;
		gap: 8px;
		flex: none;
		width: 157px;
	}
	.t-ch {
		margin-right: 6px;
	}
	.ime {
		font: 20px 'Liberation Sans', sans-serif;
		letter-spacing: 0;
		color: #fff;
		-webkit-text-stroke: 0.5px #445;
		margin: 0 6px;
		transform: scaleX(0.8);
	}
	.clock {
		width: 84px;
		flex: none;
		margin-left: 20px;
		display: flex;
		flex-direction: column;
		align-items: center;
		font-size: 12.500px;
		line-height: 16px;
		letter-spacing: 0;
		color: #eef3f7;
		font-family: 'Noto Sans', sans-serif;
		padding-right: 12px;
	}
	.orange {
		position: absolute;
		left: 1590px;
		top: 805px;
		width: 50px;
		height: 50px;
		border-radius: 50%;
		background: #f09000;
	}
</style>
